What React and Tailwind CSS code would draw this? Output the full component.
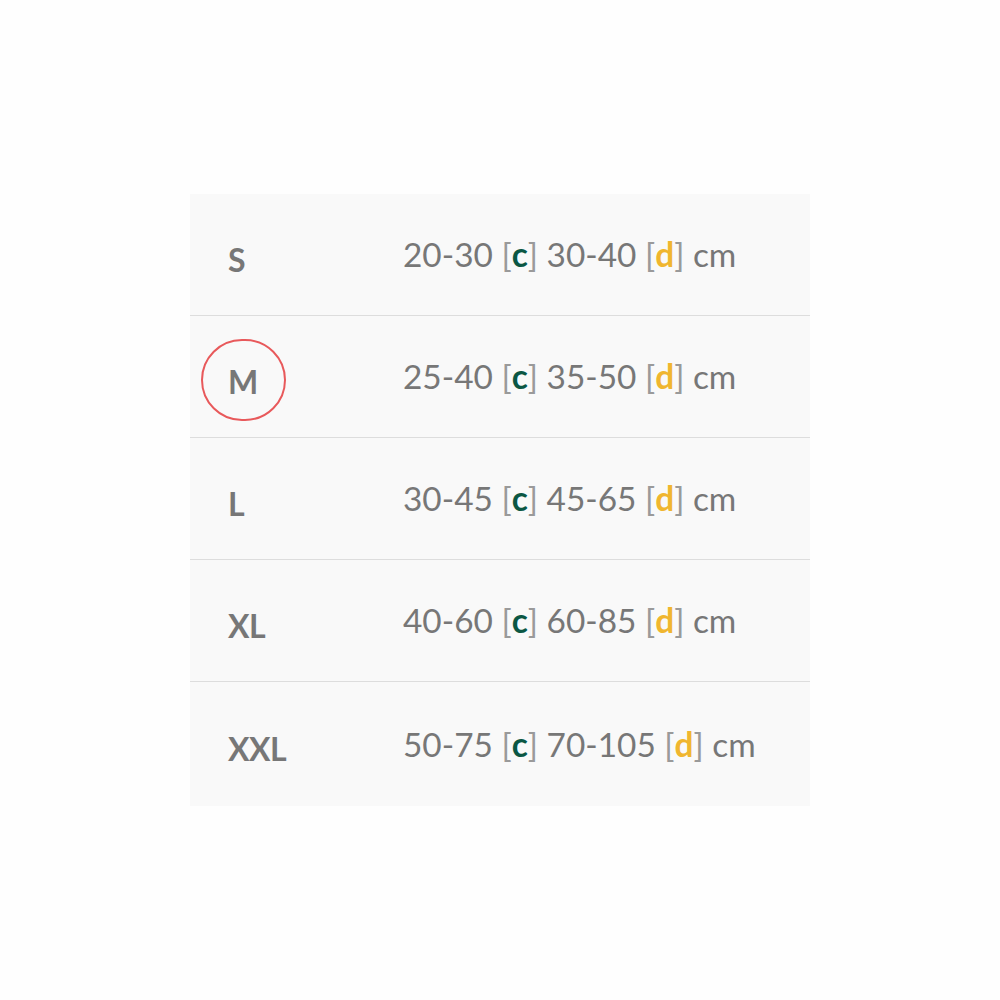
import React from "react";

const rows = [
  { size: "S", c: "20-30", d: "30-40" },
  { size: "M", c: "25-40", d: "35-50", circled: true },
  { size: "L", c: "30-45", d: "45-65" },
  { size: "XL", c: "40-60", d: "60-85" },
  { size: "XXL", c: "50-75", d: "70-105" },
];

export default function App() {
  return (
    <div className="w-[1000px] h-[1000px] bg-[#fefefe] pt-[194px] pl-[190px]" style={{ fontFamily: "Lato, 'Open Sans', sans-serif" }}>
      <div className="w-[620px] bg-[#f9f9f9]">
        {rows.map((r, i) => (
          <div
            key={r.size}
            className={`flex items-center ${i < rows.length - 1 ? "h-[122px] border-b border-[#dddddd]" : "h-[124px]"}`}
          >
            <div className="w-[213px] pl-[38px] pt-[10px] relative">
              {r.circled && (
                <div className="absolute left-[11px] top-[-9px] w-[85px] h-[82px] rounded-full border-2 border-[#e8595b]" />
              )}
              <span className="relative text-[32px] font-bold text-[#777777] tracking-[-0.5px]">{r.size}</span>
            </div>
            <div className="text-[33.4px] text-[#777777]">
              {r.c} <span className="text-[#9a9a9a]">[</span>
              <span className="font-bold text-[#0b5744]">c</span>
              <span className="text-[#9a9a9a]">]</span> {r.d} <span className="text-[#9a9a9a]">[</span>
              <span className="font-bold text-[#f0b62f]">d</span>
              <span className="text-[#9a9a9a]">]</span> cm
            </div>
          </div>
        ))}
      </div>
    </div>
  );
}
